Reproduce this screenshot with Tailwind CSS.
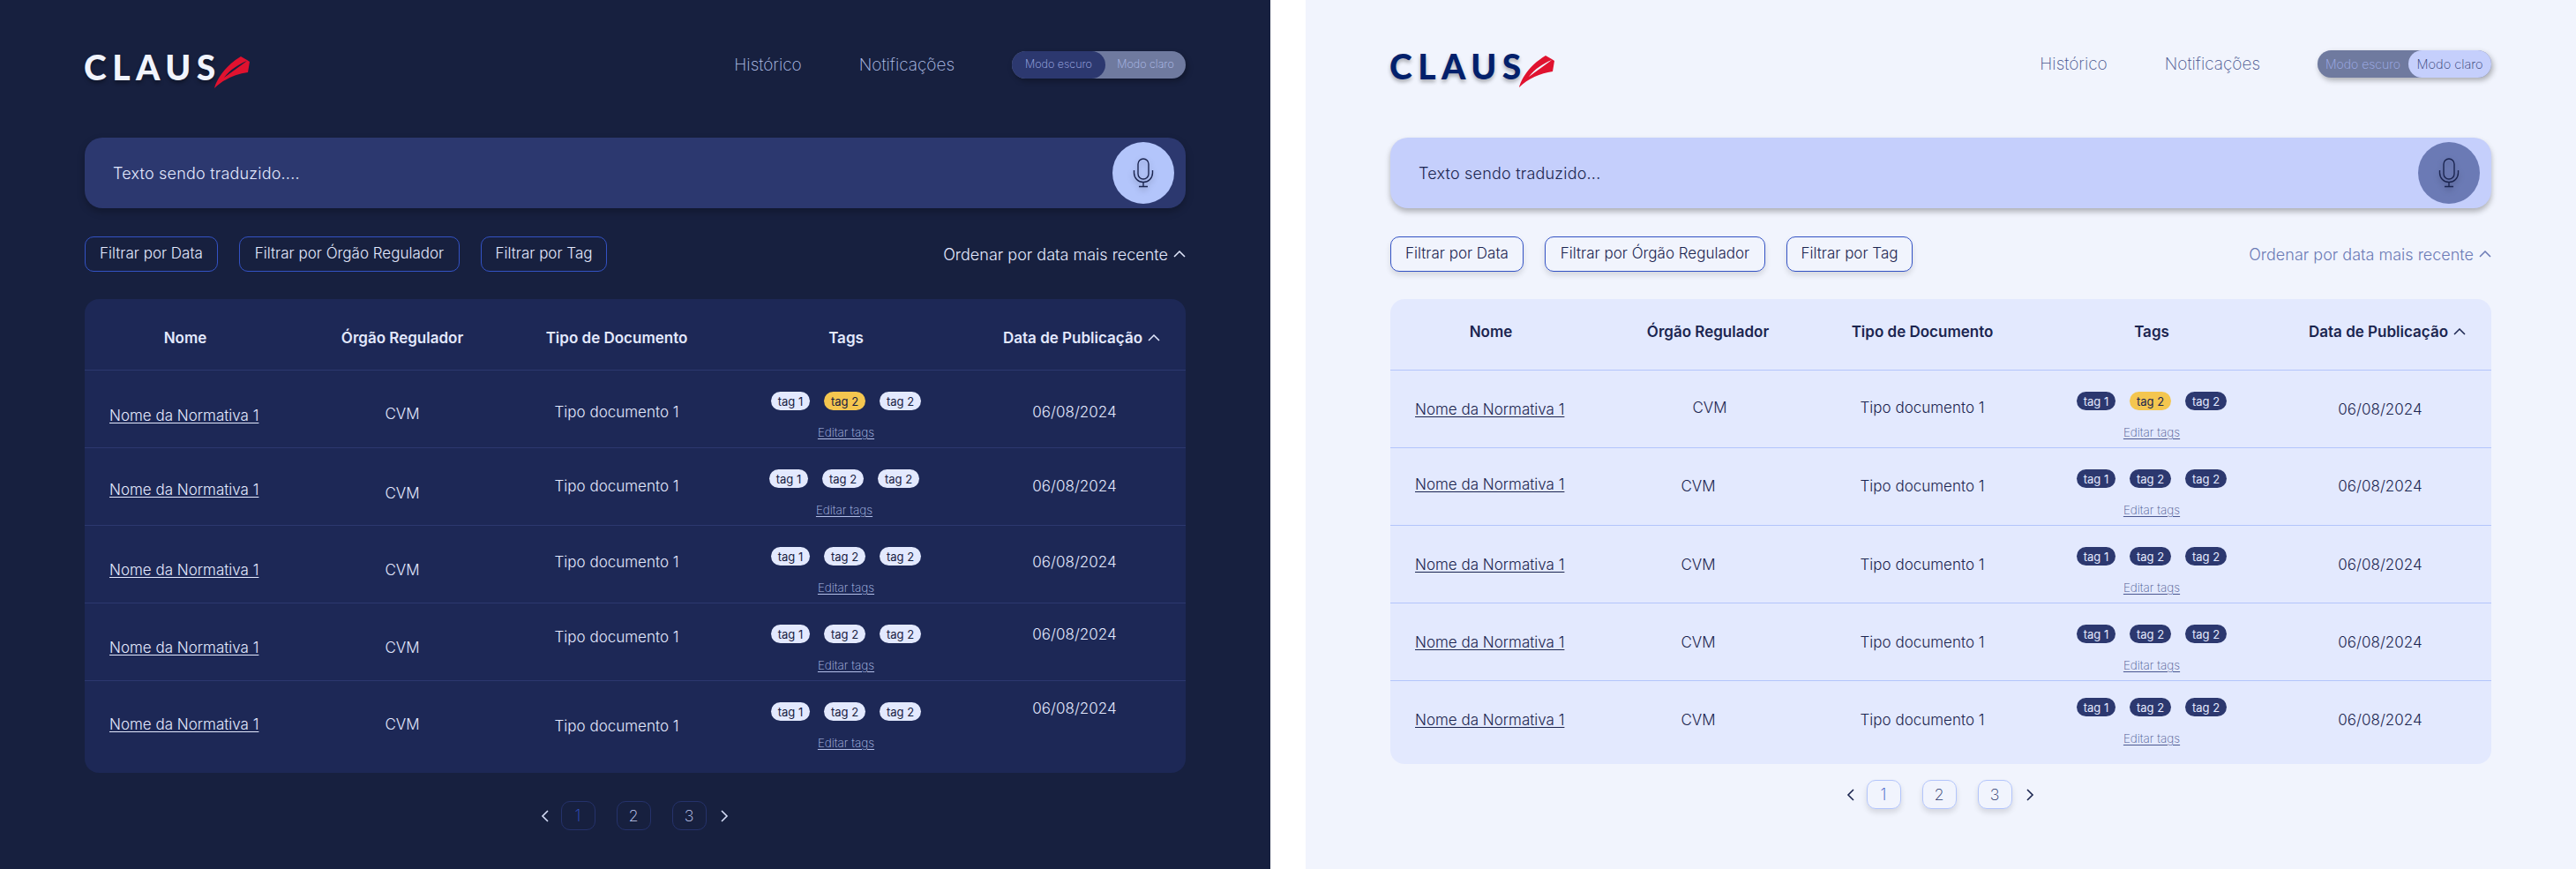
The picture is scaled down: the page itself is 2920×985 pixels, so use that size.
<!DOCTYPE html>
<html lang="pt-BR">
<head>
    <meta charset="UTF-8">
    <title>Claus</title>
    <script src="https://cdn.jsdelivr.net/npm/@tailwindcss/browser@4"></script>
</head>
<body class="bg-white font-['Inter',sans-serif]">
<div class="flex w-[2920px] h-[985px] overflow-hidden gap-[40px]">
    <div id="dark" class="w-[1440px] h-[985px] shrink-0 bg-[#17203f] px-[96px] pt-[58px]">
        <header class="flex items-center justify-between h-[31px]">
            <div class="relative flex items-center w-[187px] h-[31px]">
                <span class="font-['Lato',sans-serif] font-black text-[39px] leading-none tracking-[6.5px] mt-[5px] -ml-[1px] text-[#f1f4fd] [text-shadow:0_3px_4px_rgba(0,0,0,0.35)]">CLAUS</span>
                <svg class="absolute left-[147px] top-[6px]" width="40" height="36" viewBox="0 0 40 36"><path d="M0 36C2 28 10 12 30 0L37 4L40 6L38 18C24 20 10 26 0 36Z" fill="#e0122f"/><path d="M11 24C18 15 27 9 37 5C29 11 20 17 11 24Z" fill="#17203f"/></svg>
            </div>
            <nav class="flex items-center gap-[65px]">
                <a class="font-extralight text-[19px] mt-[2px] text-[#b4c0ea]">Histórico</a>
                <a class="font-extralight text-[19px] mt-[2px] text-[#b4c0ea]">Notificações</a>
                <div class="flex items-center w-[197px] h-[31px] rounded-full bg-[#6f7a9f] shadow-[2px_3px_6px_rgba(0,0,0,0.3)]">
                    <span class="flex items-center justify-center w-[106px] h-[31px] rounded-full bg-[#2c386f] text-[12.5px] font-extralight text-[#a9b6ec]">Modo escuro</span>
                    <span class="flex-1 text-center text-[12.5px] font-extralight text-[#b4c0ee]">Modo claro</span>
                </div>
            </nav>
        </header>
        <div class="flex items-center justify-between h-[80px] mt-[67px] pl-[32px] pr-[13px] rounded-[20px] bg-[#2c386f] shadow-[0_4px_8px_rgba(0,0,0,0.25)]">
            <span class="text-[18px] font-light tracking-[0.2px] text-[#e3e9fe]">Texto sendo traduzido....</span>
            <span class="flex items-center justify-center w-[70px] h-[70px] rounded-full bg-[#b3c5fb]">
                <svg class="drop-shadow-[0_3px_3px_rgba(0,0,0,0.25)]" width="24" height="34" viewBox="0 0 24 34" fill="none" stroke="#1b2550" stroke-width="1.4"><rect x="6" y="1" width="12" height="23" rx="6"/><path d="M1.5 14V17A10.5 10.5 0 0 0 22.5 17V14"/><path d="M12 27.5V32.5M7 32.5H17"/></svg>
            </span>
        </div>
        <div class="flex items-center justify-between mt-[32px]">
            <div class="flex gap-[24px]">
                <button class="h-[40px] w-[151px] rounded-[10px] border border-[#3352c4] text-[17px] font-light text-[#e3e9fe]">Filtrar por Data</button>
                <button class="h-[40px] w-[250px] rounded-[10px] border border-[#3352c4] text-[17px] font-light text-[#e3e9fe]">Filtrar por Órgão Regulador</button>
                <button class="h-[40px] w-[143px] rounded-[10px] border border-[#3352c4] text-[17px] font-light text-[#e3e9fe]">Filtrar por Tag</button>
            </div>
            <div class="flex items-center gap-[6px] text-[18px] font-light text-[#e3e9fe]">
                Ordenar por data mais recente
                <svg width="14" height="8" viewBox="0 0 14 8" fill="none" stroke="#e3e9fe" stroke-width="1.5"><path d="M1 7L7 1L13 7"/></svg>
            </div>
        </div>
        <div id="dark-table" class="mt-[31px] h-[537px] rounded-[16px] bg-[#1d2856] overflow-hidden"></div>
        <div class="flex items-center justify-center mt-[32px] pr-[2px]">
            <svg class="mr-[14px]" width="9" height="14" viewBox="0 0 9 14" fill="none" stroke="#d6def8" stroke-width="1.6"><path d="M8 1L2 7L8 13"/></svg>
            <div class="flex gap-[24px]">
                <span class="flex items-center justify-center w-[39px] h-[33px] rounded-[10px] border border-[#25326b] text-[18px] font-extralight text-[#3352c4]">1</span>
                <span class="flex items-center justify-center w-[39px] h-[33px] rounded-[10px] border border-[#25326b] text-[18px] font-extralight text-[#c3cdf4]">2</span>
                <span class="flex items-center justify-center w-[39px] h-[33px] rounded-[10px] border border-[#25326b] text-[18px] font-extralight text-[#c3cdf4]">3</span>
            </div>
            <svg class="ml-[16px]" width="9" height="14" viewBox="0 0 9 14" fill="none" stroke="#d6def8" stroke-width="1.6"><path d="M1 1L7 7L1 13"/></svg>
        </div>
    </div>

    <div id="light" class="w-[1440px] h-[985px] shrink-0 bg-[#f1f4fd] px-[96px] pt-[57px]">
        <header class="flex items-center justify-between h-[31px]">
            <div class="relative flex items-center w-[187px] h-[31px]">
                <span class="font-['Lato',sans-serif] font-black text-[39px] leading-none tracking-[6.5px] mt-[5px] -ml-[1px] text-[#03206b] [text-shadow:0_3px_4px_rgba(0,0,0,0.3)]">CLAUS</span>
                <svg class="absolute left-[146px] top-[6px]" width="40" height="36" viewBox="0 0 40 36"><path d="M0 36C2 28 10 12 30 0L37 4L40 6L38 18C24 20 10 26 0 36Z" fill="#e0122f"/><path d="M11 24C18 15 27 9 37 5C29 11 20 17 11 24Z" fill="#f1f4fd"/></svg>
            </div>
            <nav class="flex items-center gap-[65px]">
                <a class="font-extralight text-[19px] mt-[2px] text-[#4a5790]">Histórico</a>
                <a class="font-extralight text-[19px] mt-[2px] text-[#4a5790]">Notificações</a>
                <div class="flex items-center w-[197px] h-[31px] rounded-full bg-[#6f7a9f] shadow-[2px_3px_6px_rgba(0,0,0,0.3)]">
                    <span class="flex-1 text-center text-[14px] font-extralight text-[#a3b1ee]">Modo escuro</span>
                    <span class="flex items-center justify-center w-[94px] h-[31px] rounded-full bg-[#c5cffc] text-[14.5px] font-extralight text-[#2c386f]">Modo claro</span>
                </div>
            </nav>
        </header>
        <div class="flex items-center justify-between h-[80px] mt-[68px] pl-[32px] pr-[13px] rounded-[20px] bg-[#c5cffc] shadow-[0_4px_6px_rgba(0,0,0,0.28)]">
            <span class="text-[18px] font-light tracking-[0.2px] text-[#1b2550]">Texto sendo traduzido...</span>
            <span class="flex items-center justify-center w-[70px] h-[70px] rounded-full bg-[#6b7ab5]">
                <svg class="drop-shadow-[0_3px_3px_rgba(0,0,0,0.25)]" width="24" height="34" viewBox="0 0 24 34" fill="none" stroke="#1b2550" stroke-width="1.4"><rect x="6" y="1" width="12" height="23" rx="6"/><path d="M1.5 14V17A10.5 10.5 0 0 0 22.5 17V14"/><path d="M12 27.5V32.5M7 32.5H17"/></svg>
            </span>
        </div>
        <div class="flex items-center justify-between mt-[32px]">
            <div class="flex gap-[24px]">
                <button class="h-[40px] w-[151px] rounded-[10px] border border-[#3352c4] text-[17px] font-light text-[#1b2550] shadow-[0_4px_6px_rgba(0,0,0,0.12)]">Filtrar por Data</button>
                <button class="h-[40px] w-[250px] rounded-[10px] border border-[#3352c4] text-[17px] font-light text-[#1b2550] shadow-[0_4px_6px_rgba(0,0,0,0.12)]">Filtrar por Órgão Regulador</button>
                <button class="h-[40px] w-[143px] rounded-[10px] border border-[#3352c4] text-[17px] font-light text-[#1b2550] shadow-[0_4px_6px_rgba(0,0,0,0.12)]">Filtrar por Tag</button>
            </div>
            <div class="flex items-center gap-[6px] text-[18px] font-light text-[#6b7ab5]">
                Ordenar por data mais recente
                <svg width="14" height="8" viewBox="0 0 14 8" fill="none" stroke="#6b7ab5" stroke-width="1.5"><path d="M1 7L7 1L13 7"/></svg>
            </div>
        </div>
        <div id="light-table" class="mt-[31px] h-[527px] rounded-[16px] bg-[#e3e9fe] overflow-hidden"></div>
        <div class="flex items-center justify-center mt-[18px] pr-[2px]">
            <svg class="mr-[14px]" width="9" height="14" viewBox="0 0 9 14" fill="none" stroke="#1b2550" stroke-width="1.6"><path d="M8 1L2 7L8 13"/></svg>
            <div class="flex gap-[24px]">
                <span class="flex items-center justify-center w-[39px] h-[33px] rounded-[10px] border border-[#b3c5fb] text-[18px] font-extralight text-[#3352c4] shadow-[0_4px_6px_rgba(0,0,0,0.12)]">1</span>
                <span class="flex items-center justify-center w-[39px] h-[33px] rounded-[10px] border border-[#b3c5fb] text-[18px] font-extralight text-[#2c386f] shadow-[0_4px_6px_rgba(0,0,0,0.12)]">2</span>
                <span class="flex items-center justify-center w-[39px] h-[33px] rounded-[10px] border border-[#b3c5fb] text-[18px] font-extralight text-[#2c386f] shadow-[0_4px_6px_rgba(0,0,0,0.12)]">3</span>
            </div>
            <svg class="ml-[16px]" width="9" height="14" viewBox="0 0 9 14" fill="none" stroke="#1b2550" stroke-width="1.6"><path d="M1 1L7 7L1 13"/></svg>
        </div>
    </div>
</div>

<script>
    // the mockup's cells are not aligned row to row, so each row keeps its own top paddings
    const themes = {
        dark: {
            head: 'text-[#e3e9fe] pt-[30px]',
            text: 'text-[#e3e9fe]',
            line: 'border-[#2c386f]',
            pill: 'bg-[#e3e9fe] text-[#17203f]',
            edit: 'text-[#b4c0ea]',
            chevron: '#e3e9fe',
            rows: [
                { h: 'h-[88px]', name: 'pt-[37px]', org: 'pt-[35px]', orgX: 'pl-0', type: 'pt-[33px]', tags: 'pt-[24px] pr-0', date: 'pt-[33px]' },
                { h: 'h-[88px]', name: 'pt-[33px]', org: 'pt-[37px]', orgX: 'pl-0', type: 'pt-[29px]', tags: 'pt-[24px] pr-[4px]', date: 'pt-[29px]' },
                { h: 'h-[88px]', name: 'pt-[36px]', org: 'pt-[36px]', orgX: 'pl-0', type: 'pt-[27px]', tags: 'pt-[24px] pr-0', date: 'pt-[27px]' },
                { h: 'h-[88px]', name: 'pt-[36px]', org: 'pt-[36px]', orgX: 'pl-0', type: 'pt-[24px]', tags: 'pt-[24px] pr-0', date: 'pt-[21px]' },
                { h: 'h-[105px]', name: 'pt-[35px]', org: 'pt-[35px]', orgX: 'pl-0', type: 'pt-[37px]', tags: 'pt-[24px] pr-0', date: 'pt-[17px]' }
            ]
        },
        light: {
            head: 'text-[#1b2550] pt-[23px]',
            text: 'text-[#1b2550]',
            line: 'border-[#b3c5fb]',
            pill: 'bg-[#2c386f] text-[#e3e9fe]',
            edit: 'text-[#4a5790]',
            chevron: '#1b2550',
            rows: [
                { h: 'h-[88px]', name: 'pt-[30px]', org: 'pt-[28px]', orgX: 'pl-[4px]', type: 'pt-[28px]', tags: 'pt-[24px] pr-0', date: 'pt-[30px]' },
                { h: 'h-[88px]', name: 'pt-[27px]', org: 'pt-[29px]', orgX: 'pr-[22px]', type: 'pt-[29px]', tags: 'pt-[24px] pr-0', date: 'pt-[29px]' },
                { h: 'h-[88px]', name: 'pt-[30px]', org: 'pt-[30px]', orgX: 'pr-[22px]', type: 'pt-[30px]', tags: 'pt-[24px] pr-0', date: 'pt-[30px]' },
                { h: 'h-[88px]', name: 'pt-[30px]', org: 'pt-[30px]', orgX: 'pr-[22px]', type: 'pt-[30px]', tags: 'pt-[24px] pr-0', date: 'pt-[30px]' },
                { h: 'h-[95px]', name: 'pt-[30px]', org: 'pt-[30px]', orgX: 'pr-[22px]', type: 'pt-[30px]', tags: 'pt-[19px] pr-0', date: 'pt-[30px]' }
            ]
        }
    }

    const gridCols = 'grid grid-cols-[240px_240px_246px_274px_248px]'

    function renderTable(id, theme) {
        const header = `
            <div class="${gridCols} h-[80px] text-center text-[17px] leading-[28px] font-semibold ${theme.head}">
                <div class="pr-[12px]">Nome</div>
                <div>Órgão Regulador</div>
                <div>Tipo de Documento</div>
                <div>Tags</div>
                <div class="flex items-center justify-center gap-[6px] h-[28px] pl-[12px]">Data de Publicação
                    <svg width="14" height="8" viewBox="0 0 14 8" fill="none" stroke="${theme.chevron}" stroke-width="1.5"><path d="M1 7L7 1L13 7"/></svg>
                </div>
            </div>`

        const rows = theme.rows.map((row, i) => `
            <div class="${gridCols} ${row.h} border-t ${theme.line} text-[17px] leading-[28px] font-light ${theme.text}">
                <div class="pl-[28px] ${row.name}"><a class="underline underline-offset-2 whitespace-nowrap">Nome da Normativa 1</a></div>
                <div class="text-center ${row.org} ${row.orgX}">CVM</div>
                <div class="text-center ${row.type}">Tipo documento 1</div>
                <div class="flex flex-col items-center ${row.tags}">
                    <div class="flex gap-[16px]">
                        <span class="flex items-center justify-center w-[44px] h-[21px] rounded-full text-[13px] font-normal ${theme.pill}">tag 1</span>
                        <span class="flex items-center justify-center w-[47px] h-[21px] rounded-full text-[13px] font-normal ${id === 'dark' && i === 0 ? 'bg-[#f4c64f] text-[#17203f]' : id === 'light' && i === 0 ? 'bg-[#f4c64f] text-[#1b2550]' : theme.pill}">tag 2</span>
                        <span class="flex items-center justify-center w-[47px] h-[21px] rounded-full text-[13px] font-normal ${theme.pill}">tag 2</span>
                    </div>
                    <a class="mt-[15px] text-[13.5px] leading-[20px] font-extralight underline underline-offset-2 ${theme.edit}">Editar tags</a>
                </div>
                <div class="text-center pr-[4px] ${row.date}">06/08/2024</div>
            </div>`).join('')

        document.getElementById(id + '-table').innerHTML = header + rows
    }

    renderTable('dark', themes.dark)
    renderTable('light', themes.light)
</script>
</body>
</html>
